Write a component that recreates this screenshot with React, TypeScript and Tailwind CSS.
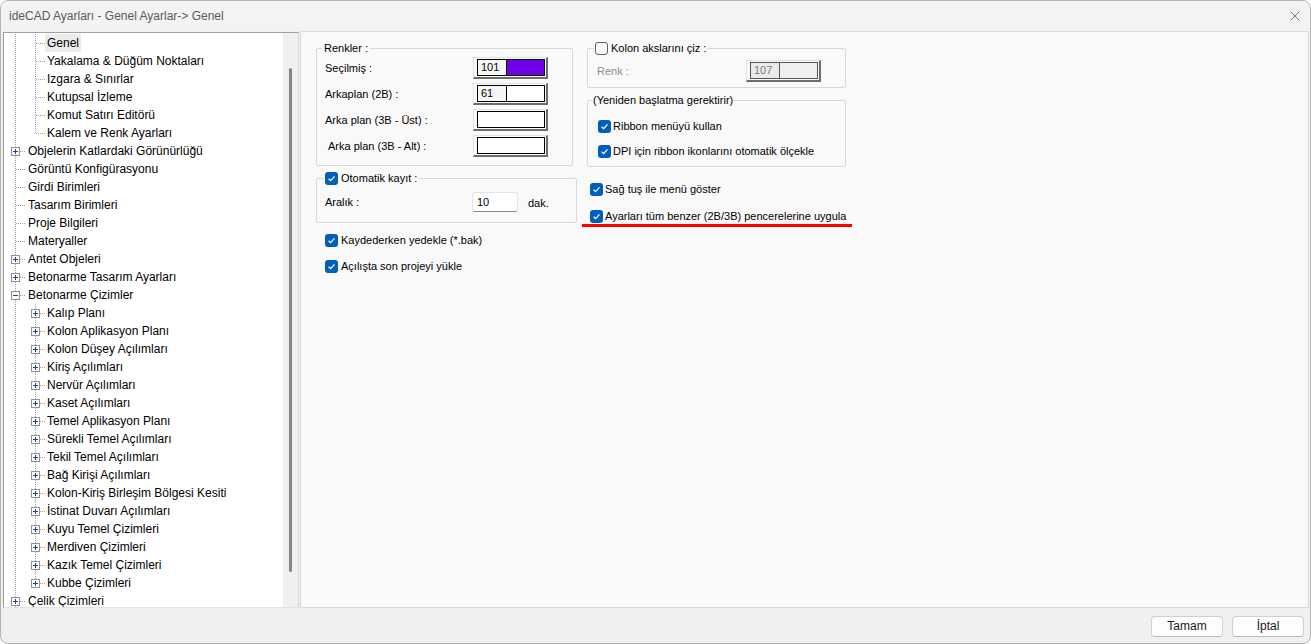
import React from "react";

type Node = { t: string; l: 1 | 2; exp?: "+" | "-"; sel?: boolean; last?: boolean };

const tree: Node[] = [
  { t: "Genel", l: 2, sel: true },
  { t: "Yakalama & Düğüm Noktaları", l: 2 },
  { t: "Izgara & Sınırlar", l: 2 },
  { t: "Kutupsal İzleme", l: 2 },
  { t: "Komut Satırı Editörü", l: 2 },
  { t: "Kalem ve Renk Ayarları", l: 2, last: true },
  { t: "Objelerin Katlardaki Görünürlüğü", l: 1, exp: "+" },
  { t: "Görüntü Konfigürasyonu", l: 1 },
  { t: "Girdi Birimleri", l: 1 },
  { t: "Tasarım Birimleri", l: 1 },
  { t: "Proje Bilgileri", l: 1 },
  { t: "Materyaller", l: 1 },
  { t: "Antet Objeleri", l: 1, exp: "+" },
  { t: "Betonarme Tasarım Ayarları", l: 1, exp: "+" },
  { t: "Betonarme Çizimler", l: 1, exp: "-" },
  { t: "Kalıp Planı", l: 2, exp: "+" },
  { t: "Kolon Aplikasyon Planı", l: 2, exp: "+" },
  { t: "Kolon Düşey Açılımları", l: 2, exp: "+" },
  { t: "Kiriş Açılımları", l: 2, exp: "+" },
  { t: "Nervür Açılımları", l: 2, exp: "+" },
  { t: "Kaset Açılımları", l: 2, exp: "+" },
  { t: "Temel Aplikasyon Planı", l: 2, exp: "+" },
  { t: "Sürekli Temel Açılımları", l: 2, exp: "+" },
  { t: "Tekil Temel Açılımları", l: 2, exp: "+" },
  { t: "Bağ Kirişi Açılımları", l: 2, exp: "+" },
  { t: "Kolon-Kiriş Birleşim Bölgesi Kesiti", l: 2, exp: "+" },
  { t: "İstinat Duvarı Açılımları", l: 2, exp: "+" },
  { t: "Kuyu Temel Çizimleri", l: 2, exp: "+" },
  { t: "Merdiven Çizimleri", l: 2, exp: "+" },
  { t: "Kazık Temel Çizimleri", l: 2, exp: "+" },
  { t: "Kubbe Çizimleri", l: 2, exp: "+", last: true },
  { t: "Çelik Çizimleri", l: 1, exp: "+" },
];

// dotted tree guide cell, 20x18
function Guide({ horiz, half, exp }: { horiz?: boolean; half?: boolean; exp?: "+" | "-" }) {
  return (
    <svg width="20" height="18" className="block shrink-0" shapeRendering="crispEdges">
      <line x1="10.5" y1="0" x2="10.5" y2={half ? 10 : 18} stroke="#a0a0a0" strokeDasharray="1 1" />
      {horiz && <line x1="11" y1="9.5" x2="20" y2="9.5" stroke="#a0a0a0" strokeDasharray="1 1" />}
      {exp && (
        <>
          <rect x="6.5" y="5.5" width="8" height="8" fill="#fdfdfd" stroke="#919191" />
          <line x1="8" y1="9.5" x2="13" y2="9.5" stroke="#24418f" />
          {exp === "+" && <line x1="10.5" y1="7" x2="10.5" y2="12" stroke="#24418f" />}
        </>
      )}
    </svg>
  );
}

function TreeRow({ n }: { n: Node }) {
  return (
    <div className="flex items-center h-[18px] pl-px">
      {n.l === 1 ? (
        <>
          <Guide horiz exp={n.exp} />
          <span className="ml-px px-[2px] leading-[18px] whitespace-nowrap">{n.t}</span>
        </>
      ) : (
        <>
          <Guide />
          <Guide horiz half={n.last} exp={n.exp} />
          <span className={`px-[2px] leading-[18px] whitespace-nowrap ${n.sel ? "bg-[#ebebeb]" : ""}`}>{n.t}</span>
        </>
      )}
    </div>
  );
}

function Check({ on = true, label, gap = "gap-[2px]" }: { on?: boolean; label: string; gap?: string }) {
  return (
    <span className={`flex items-center ${gap}`}>
      {on ? (
        <span className="w-[13px] h-[13px] rounded-[3px] bg-[#005fb8] flex items-center justify-center shrink-0">
          <svg width="9" height="9" viewBox="0 0 9 9">
            <path d="M1.6 4.7 L3.6 6.6 L7.5 2.3" stroke="#fff" strokeWidth="1.2" fill="none" />
          </svg>
        </span>
      ) : (
        <span className="w-[13px] h-[13px] rounded-[3px] border border-[#5f5f5f] bg-[#fafafa] shrink-0" />
      )}
      <span className="whitespace-nowrap">{label}</span>
    </span>
  );
}

function ColorBtn({ num, fill, disabled }: { num?: string; fill?: string; disabled?: boolean }) {
  return (
    <div className="w-[75px] h-[22px] flex border-t border-l border-[#e3e3e3] border-r-2 border-b-2 border-r-[#6d6d6d] border-b-[#6d6d6d] pt-px pb-px pl-[3px] pr-px">
      <div className={`flex-1 flex border ${disabled ? "border-[#555555] bg-[#efefef]" : "border-black bg-white"}`}>
        {num && (
          <div
            className={`w-[29px] border-r pl-[3px] leading-[15px] ${
              disabled ? "border-[#555555] bg-[#eaeaea] text-[#7a7a7a]" : "border-black bg-[#f6f6f6]"
            }`}
          >
            {num}
          </div>
        )}
        <div className={`flex-1 ${fill ?? ""}`} />
      </div>
    </div>
  );
}

export default function App() {
  return (
    <div className="w-[1311px] h-[644px] flex flex-col overflow-hidden rounded-[8px] border border-[#b4b4b4] bg-[#f0f0f0] font-['Liberation_Sans',Arial,sans-serif] text-black">
      {/* title bar */}
      <div className="h-[30px] shrink-0 flex items-center justify-between pl-[8px] pr-[10px] bg-[#f3f3f3] text-[12px] text-[#5a5a5a]">
        <span>ideCAD Ayarları - Genel Ayarlar-&gt; Genel</span>
        <svg width="10" height="10" viewBox="0 0 10 10">
          <path d="M0.5 0.5 L9.5 9.5 M9.5 0.5 L0.5 9.5" stroke="#7a7a7a" strokeWidth="1" />
        </svg>
      </div>

      <div className="h-[577px] flex pl-[2px] pr-px gap-px">
        {/* tree */}
        <div className="mt-px w-[296px] h-[576px] flex border-t border-l border-[#a0a0a0] border-r border-b border-r-[#d8d8d8] border-b-[#e3e3e3] text-[12px]">
          <div className="flex-1 bg-white pt-px overflow-hidden">
            {tree.map((n, i) => (
              <TreeRow key={i} n={n} />
            ))}
          </div>
          <div className="w-[15px] bg-[#f0f0f0] flex justify-center">
            <div className="mt-[35px] w-[3px] h-[504px] rounded-full bg-[#868686]" />
          </div>
        </div>

        {/* settings panel */}
        <div className="w-[1009px] h-[577px] border border-[#dadada] bg-[#f9f9f9] flex pl-[15px] pt-[9px] gap-[10px] text-[11px]">
          {/* left column */}
          <div className="w-[261px] flex flex-col">
            <fieldset className="w-[257px] border border-[#d9d9d9] rounded-[2px] pb-[8px]">
              <legend className="ml-[5px] px-[2px] leading-[14px]">Renkler :</legend>
              <div className="mt-[2px] pl-[8px] pr-[24px] flex flex-col gap-[4px]">
                <div className="h-[22px] flex items-center justify-between">
                  <span>Seçilmiş :</span>
                  <ColorBtn num="101" fill="bg-[#7000e6]" />
                </div>
                <div className="h-[22px] flex items-center justify-between">
                  <span>Arkaplan (2B) :</span>
                  <ColorBtn num="61" />
                </div>
                <div className="h-[22px] flex items-center justify-between">
                  <span>Arka plan (3B - Üst) :</span>
                  <ColorBtn />
                </div>
                <div className="h-[22px] flex items-center justify-between">
                  <span className="pl-[3px]">Arka plan (3B - Alt) :</span>
                  <ColorBtn />
                </div>
              </div>
            </fieldset>

            <fieldset className="mt-[5px] w-[261px] border border-[#d9d9d9] rounded-[2px] pb-[10px]">
              <legend className="ml-[7px] px-px leading-[14px]">
                <Check label="Otomatik kayıt :" gap="gap-[3px]" />
              </legend>
              <div className="mt-[7px] pl-[8px] h-[20px] flex items-center">
                <span className="w-[147px]">Aralık :</span>
                <div className="w-[46px] h-[20px] bg-white border border-[#e3e3e3] border-b-[#8a8a8a] rounded-[3px] pl-[4px] leading-[18px]">10</div>
                <span className="ml-[10px] mt-[2px]">dak.</span>
              </div>
            </fieldset>

            <div className="mt-[7px] pl-[9px] h-[20px] flex items-center">
              <Check label="Kaydederken yedekle (*.bak)" gap="gap-[3px]" />
            </div>
            <div className="mt-[6px] pl-[9px] h-[20px] flex items-center">
              <Check label="Açılışta son projeyi yükle" gap="gap-[3px]" />
            </div>
          </div>

          {/* right column */}
          <div className="w-[259px] flex flex-col">
            <fieldset className="w-[259px] border border-[#d9d9d9] rounded-[2px] pb-[5px]">
              <legend className="ml-[6px] px-px leading-[14px]">
                <Check on={false} label="Kolon akslarını çiz :" gap="gap-[3px]" />
              </legend>
              <div className="mt-[5px] pl-[9px] h-[22px] flex items-center">
                <span className="w-[149px] text-[#8d8d8d]">Renk :</span>
                <ColorBtn num="107" disabled />
              </div>
            </fieldset>

            <fieldset className="mt-[5px] w-[259px] border border-[#d9d9d9] rounded-[2px] pb-[5px]">
              <legend className="ml-[4px] px-px leading-[14px]">(Yeniden başlatma gerektirir)</legend>
              <div className="mt-[9px] pl-[10px] h-[20px] flex items-center">
                <Check label="Ribbon menüyü kullan" />
              </div>
              <div className="mt-[5px] pl-[10px] h-[20px] flex items-center">
                <Check label="DPI için ribbon ikonlarını otomatik ölçekle" />
              </div>
            </fieldset>

            <div className="mt-[12px] pl-[3px] h-[20px] flex items-center">
              <Check label="Sağ tuş ile menü göster" />
            </div>
            <div className="mt-[7px] pl-[3px] h-[20px] flex items-center">
              <Check label="Ayarları tüm benzer (2B/3B) pencerelerine uygula" />
            </div>
            <div className="-mt-[2px] -ml-[5px] w-[270px] h-[3px] bg-[#ff0000]" />
          </div>
        </div>
      </div>

      {/* bottom buttons */}
      <div className="flex-1 flex justify-end items-start gap-[9px] pt-[8px] pr-[6px] text-[12px]">
        <button className="w-[72px] h-[21px] rounded-[4px] border border-[#d0d0d0] border-b-[#b8b8b8] bg-[#fdfdfd] text-[#1a1a1a] leading-[19px]">
          Tamam
        </button>
        <button className="w-[72px] h-[21px] rounded-[4px] border border-[#d0d0d0] border-b-[#b8b8b8] bg-[#fdfdfd] text-[#1a1a1a] leading-[19px]">
          İptal
        </button>
      </div>
    </div>
  );
}
